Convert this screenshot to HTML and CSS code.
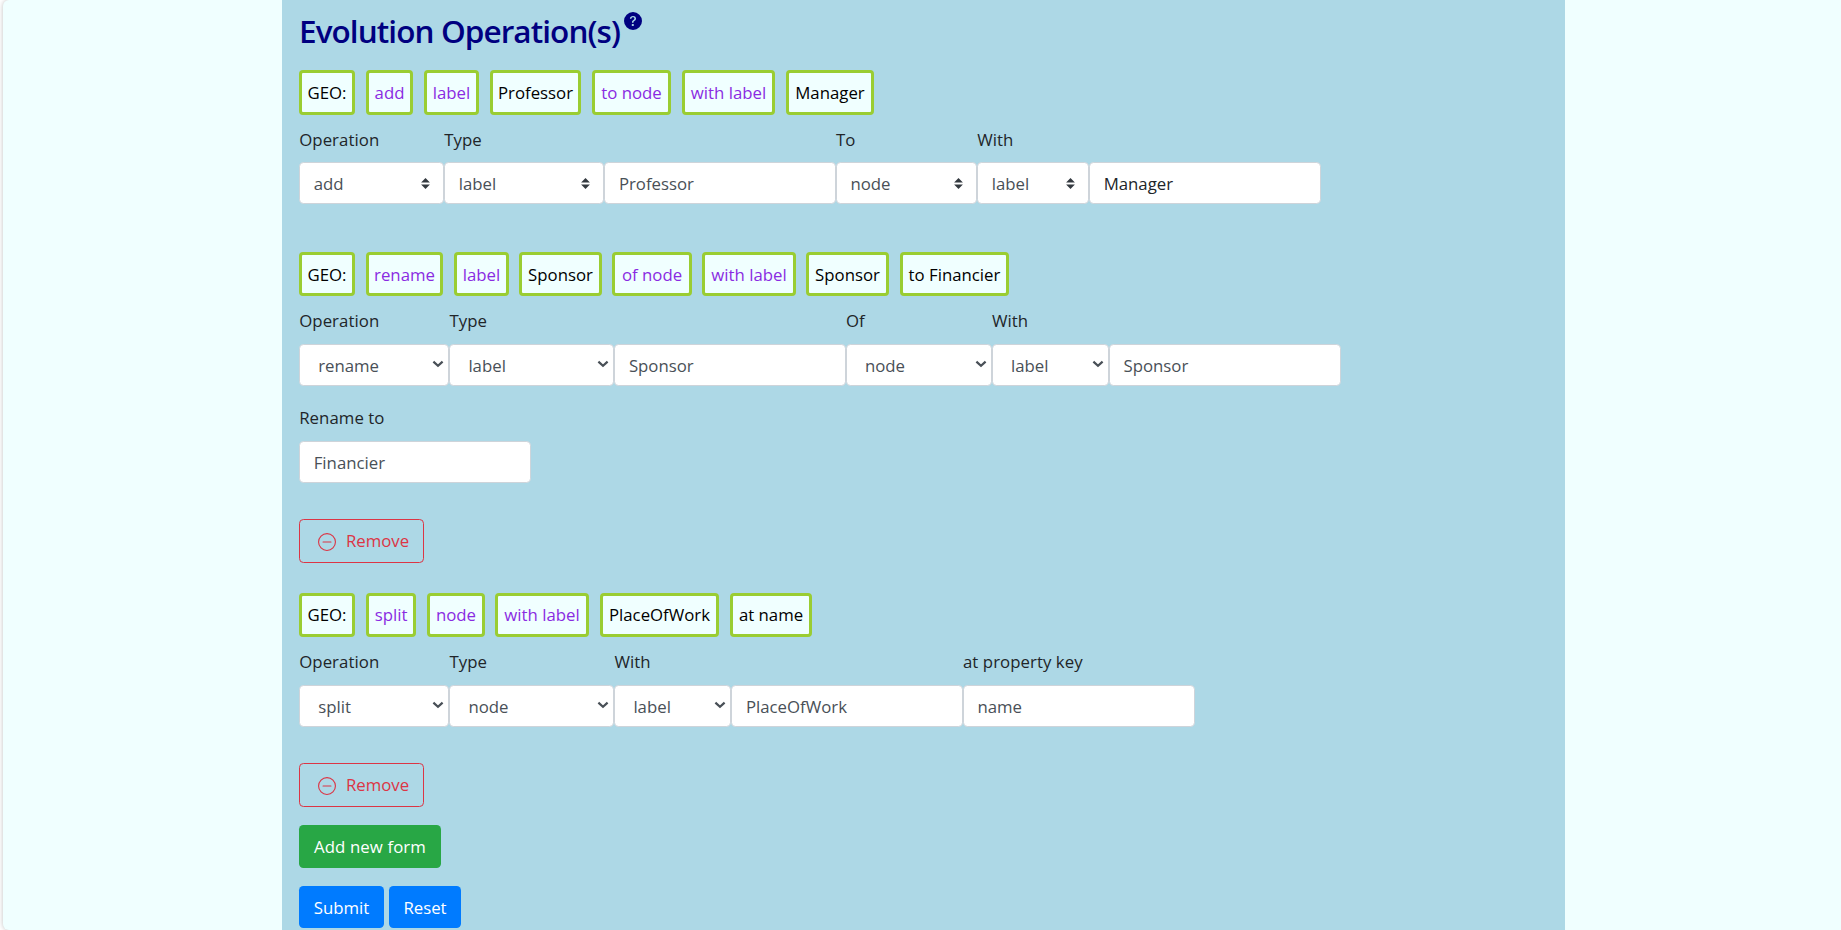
FILE: index.html
```html
<!DOCTYPE html>
<html lang="en">
<head>
<meta charset="utf-8">
<title>Evolution Operation(s)</title>
<link rel="stylesheet" href="styles.css">
</head>
<body>
<svg width="0" height="0" class="defs" aria-hidden="true">
  <symbol id="sort" viewBox="0 0 4 5"><path fill="#343a40" d="M2 0L0 2h4zm0 5L0 3h4z"/></symbol>
  <symbol id="chev" viewBox="0 0 12 8"><path fill="none" stroke="#495057" stroke-width="2.2" d="M1.4 1.6L6 5.8l4.6-4.2"/></symbol>
  <symbol id="minus" viewBox="0 0 16 16"><path fill="currentColor" d="M8 15A7 7 0 1 1 8 1a7 7 0 0 1 0 14zm0 1A8 8 0 1 0 8 0a8 8 0 0 0 0 16z"/><path fill="currentColor" d="M4 8a.5.5 0 0 1 .5-.5h7a.5.5 0 0 1 0 1h-7A.5.5 0 0 1 4 8z"/></symbol>
</svg>
<div class="page">
  <main class="panel">
    <h2 class="title"><span class="title-text">Evolution Operation(s)</span><svg class="help" viewBox="0 0 16 16"><path fill="currentColor" fill-rule="evenodd" d="M16 8A8 8 0 1 1 0 8a8 8 0 0 1 16 0zM6.57 6.033H5.25C5.22 4.147 6.68 3.5 8.006 3.5c1.397 0 2.673.73 2.673 2.24 0 1.08-.635 1.594-1.244 2.057-.737.559-1.01.768-1.01 1.486v.355H7.117l-.007-.463c-.038-.927.495-1.498 1.168-1.987.59-.444.965-.736.965-1.371 0-.825-.628-1.168-1.314-1.168-.901 0-1.358.603-1.358 1.384zm1.251 6.443c-.584 0-1.009-.394-1.009-.927 0-.552.425-.94 1.01-.94.609 0 1.028.388 1.028.94 0 .533-.42.927-1.029.927z"/></svg></h2>

    <section class="op op-first">
      <div class="chips">
        <span class="chip w56">GEO:</span><span class="chip kw w47">add</span><span class="chip kw w55">label</span><span class="chip w91">Professor</span><span class="chip kw w79">to node</span><span class="chip kw w93">with label</span><span class="chip w88">Manager</span>
      </div>
      <div class="fields">
        <div class="field c145"><label>Operation</label><div class="control custom">add<svg><use href="#sort"/></svg></div></div>
        <div class="field c160"><label>Type</label><div class="control custom">label<svg><use href="#sort"/></svg></div></div>
        <div class="field c232"><input class="control" value="Professor"></div>
        <div class="field c141"><label>To</label><div class="control custom">node<svg><use href="#sort"/></svg></div></div>
        <div class="field c112"><label>With</label><div class="control custom">label<svg><use href="#sort"/></svg></div></div>
        <div class="field c232"><input class="control dark" value="Manager"></div>
      </div>
    </section>

    <section class="op op-second">
      <div class="chips">
        <span class="chip w56">GEO:</span><span class="chip kw w77">rename</span><span class="chip kw w55">label</span><span class="chip w83">Sponsor</span><span class="chip kw w80">of node</span><span class="chip kw w94">with label</span><span class="chip w83">Sponsor</span><span class="chip w109">to Financier</span>
      </div>
      <div class="fields">
        <div class="field c150"><label>Operation</label><div class="control select">rename<svg><use href="#chev"/></svg></div></div>
        <div class="field c165"><label>Type</label><div class="control select">label<svg><use href="#chev"/></svg></div></div>
        <div class="field c232"><input class="control" value="Sponsor"></div>
        <div class="field c146"><label>Of</label><div class="control select">node<svg><use href="#chev"/></svg></div></div>
        <div class="field c117"><label>With</label><div class="control select">label<svg><use href="#chev"/></svg></div></div>
        <div class="field c232"><input class="control" value="Sponsor"></div>
      </div>
      <div class="fields extra">
        <div class="field c232"><label>Rename to</label><input class="control" value="Financier"></div>
      </div>
      <button class="btn remove"><svg><use href="#minus"/></svg><span>Remove</span></button>
    </section>

    <section class="op op-third">
      <div class="chips">
        <span class="chip w56">GEO:</span><span class="chip kw w50">split</span><span class="chip kw w58">node</span><span class="chip kw w94">with label</span><span class="chip w119">PlaceOfWork</span><span class="chip w82">at name</span>
      </div>
      <div class="fields">
        <div class="field c150"><label>Operation</label><div class="control select">split<svg><use href="#chev"/></svg></div></div>
        <div class="field c165"><label>Type</label><div class="control select">node<svg><use href="#chev"/></svg></div></div>
        <div class="field c117"><label>With</label><div class="control select">label<svg><use href="#chev"/></svg></div></div>
        <div class="field c232"><input class="control" value="PlaceOfWork"></div>
        <div class="field c232"><label>at property key</label><input class="control" value="name"></div>
      </div>
      <button class="btn remove"><svg><use href="#minus"/></svg><span>Remove</span></button>
    </section>

    <button class="btn add">Add new form</button>
    <div class="actions"><button class="btn submit">Submit</button><button class="btn reset">Reset</button></div>
  </main>
</div>
</body>
</html>
```
FILE: styles.css
```css
* { box-sizing: border-box; }
html, body { height: 100%; }
body {
  margin: 0;
  overflow: hidden;
  background: #fff;
  color: #212529;
  font: 16.8px/27px "Open Sans", "Noto Sans", sans-serif;
}
.defs { display: block; }
.page {
  height: 930px;
  margin-left: 3px;
  padding-left: 279px;
  background: azure;
  border-radius: 6px 0 0 6px;
  box-shadow: 0 0 5px rgba(0, 0, 0, .25);
}
.panel {
  width: 1283px;
  height: 930px;
  padding: 0 17px;
  background: lightblue;
}
.title {
  display: flex;
  align-items: flex-start;
  height: 70px;
  margin: 0;
  color: navy;
  font-size: 31.5px;
  font-weight: 600;
  line-height: 40px;
}
.title-text { width: 325px; padding-top: 11px; white-space: nowrap; letter-spacing: -.92px; }
.help { width: 18px; height: 18px; margin-top: 12px; }

.op-first { height: 182px; }
.op-second { height: 341px; }
.op-third { height: 232px; }

.chips { display: flex; height: 44px; }
.op-first .chips { height: 45px; }
.op-second .chips, .op-third .chips { line-height: 28px; }
.chip {
  display: flex;
  align-items: center;
  justify-content: center;
  margin-right: 11px;
  border: 3px solid yellowgreen;
  border-radius: 4px;
  background: azure;
  color: #000;
  white-space: nowrap;
}
.op-second .chip { padding-top: 1px; }
.kw { color: blueviolet; }
.w47 { width: 47px; }
.w50 { width: 50px; }
.w55 { width: 55px; }
.w56 { width: 56px; }
.w58 { width: 58px; margin-right: 10px; }
.w77 { width: 77px; }
.w79 { width: 79px; }
.w80 { width: 80px; margin-right: 10px; }
.w82 { width: 82px; }
.w83 { width: 83px; }
.w88 { width: 88px; }
.w91 { width: 91px; }
.w93 { width: 93px; }
.w94 { width: 94px; }
.w109 { width: 109px; }
.w119 { width: 119px; }
.op-second .w55, .op-second .w83:nth-child(4), .op-second .w94 { margin-right: 10px; }

.fields { display: flex; height: 89.3px; align-items: flex-end; padding-left: .2px; }
.op-second .fields, .op-third .fields { height: 89.5px; }
.op-second .extra { height: 97px; }
.field label { display: block; height: 36px; white-space: nowrap; letter-spacing: .06px; }
.op-second label, .op-third label { height: 36.5px; }
.control {
  display: flex;
  align-items: center;
  width: 100%;
  height: 42px;
  padding: 0 13.5px;
  border: 1px solid #ced4da;
  border-radius: 4.4px;
  background: #fff;
  color: #495057;
  font: inherit;
}
.op-second input, .op-third input { padding-top: 1px; }
.field { flex: none; }
.dark { color: #212529; }
.custom svg { width: 9px; height: 11px; margin-left: auto; }
.select { padding: 1px 4px 0 18px; }
.select svg { width: 12px; height: 8px; margin-left: auto; margin-bottom: 2px; }
.c112 { width: 112px; }
.c117 { width: 117px; }
.c141 { width: 141.2px; }
.c145 { width: 145px; }
.c146 { width: 146px; }
.c150 { width: 150.2px; }
.c160 { width: 160.2px; }
.c165 { width: 165px; }
.c232 { width: 231.6px; }

.btn {
  display: flex;
  align-items: center;
  justify-content: center;
  height: 43px;
  padding: 0;
  border: 0;
  border-radius: 4.4px;
  color: #fff;
  font: inherit;
}
.remove {
  width: 125px;
  height: 44px;
  margin-top: 36.5px;
  border: 1px solid #dc3545;
  background: transparent;
  color: #dc3545;
}
.remove svg { width: 18px; height: 18px; margin: 2px 10px 0 4px; }
.remove span { padding-bottom: 2px; }
.add { width: 142px; background: #28a745; letter-spacing: .1px; }
.actions { display: flex; gap: 5px; margin-top: 18px; }
.actions .btn { height: 42px; background: #007bff; }
.submit { width: 85px; }
.reset { width: 72px; }
```
